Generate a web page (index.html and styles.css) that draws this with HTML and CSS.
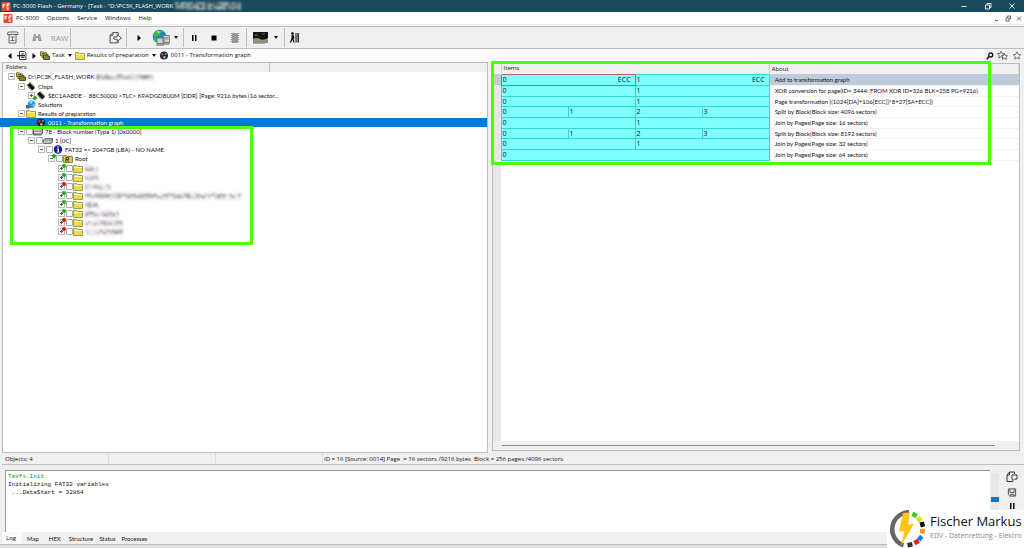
FILE: index.html
```html
<!DOCTYPE html>
<html lang="en">
<head>
<meta charset="utf-8">
<title>PC-3000 Flash</title>
<link rel="stylesheet" href="styles.css">
</head>
<body>
<svg class="defs" aria-hidden="true">
  <symbol id="logo" viewBox="0 0 10 10"><rect width="10" height="10" rx="1" fill="#e8472b"/><path d="M1 2h3v2H3v2H1zM6 1h3v2H8v2H5V3h1zM5 6h3v3H6V7H5z" fill="#ffd9c9"/></symbol>
  <symbol id="folder" viewBox="0 0 10 9"><path d="M.5 1.500h3l1 1h5v6h-9z" fill="#e6dc52" stroke="#8f8a3c" stroke-width=".8"/><path d="M1 3.500h8" stroke="#fffbb0" stroke-width="1"/></symbol>
  <symbol id="stack" viewBox="0 0 10 9"><path d="M.5.8h3l1 1h2v3h-6z" fill="#e6dc52" stroke="#55521c" stroke-width=".8"/><path d="M2 2.500h3l1 1h2v3H2z" fill="#c9bf3a" stroke="#55521c" stroke-width=".8"/><path d="M3.500 4h3l1 1h2v3.500h-6z" fill="#8c8630" stroke="#333112" stroke-width=".8"/></symbol>
  <symbol id="chip" viewBox="0 0 10 9"><path d="M1 3 4 .5 9 6 6 8.500z" fill="#161616"/><path d="M1 3.500 5.500 8.500M4.500.5l4.500 5" stroke="#8b8340" stroke-width="1.200" stroke-dasharray="1 .8"/></symbol>
  <symbol id="globe" viewBox="0 0 10 9"><circle cx="5.500" cy="4.300" r="3.800" fill="#2196e3"/><path d="M3 2q3-2 4 0L5 4zM6 5l3-1-1 3z" fill="#9bdcf4"/><path d="M0 5h4v3.500H0z" fill="#4f6e86"/></symbol>
  <symbol id="graph" viewBox="0 0 10 9"><circle cx="5" cy="4.500" r="4" fill="#1f2430"/><circle cx="3.300" cy="3.300" r="1.200" fill="#d23b32"/><circle cx="6.700" cy="3" r="1.100" fill="#4aa3ff"/><circle cx="5.400" cy="6.300" r="1.200" fill="#b9b9b9"/></symbol>
  <symbol id="drive" viewBox="0 0 10 9"><path d="M.5 4 2 2.500h7.500V6L8 7.500H.5z" fill="#c4c4c4" stroke="#555" stroke-width=".8"/><path d="M.5 4H8l1.500-1.500M8 4v3.500" stroke="#777" stroke-width=".6" fill="none"/></symbol>
  <symbol id="block" viewBox="0 0 10 9"><path d="M.5 3 2 1h7.500v5L8 8H.5z" fill="#9d9d9d" stroke="#3c3c3c" stroke-width=".8"/><path d="M.5 3H8M1 5.500h7" stroke="#eee" stroke-width=".8"/></symbol>
  <symbol id="info" viewBox="0 0 9 9"><circle cx="4.500" cy="4.500" r="4.200" fill="#0b1a98"/><path d="M4.500 1.300v1.500M3.300 4h1.500v3M3.200 7h2.700" stroke="#fff" stroke-width="1.200" fill="none"/></symbol>
  <symbol id="rootdir" viewBox="0 0 10 9"><path d="M.5 1.500h3l1 1h5v6h-9z" fill="#d8cc42" stroke="#77722a" stroke-width=".8"/><path d="M3 8V3.500h2.500v2H3.500l3 2.500" stroke="#222" stroke-width=".9" fill="none"/></symbol>
  <symbol id="scroll" viewBox="0 0 12 13"><path d="M2.500 1h7.500q2 0 1.500 2.500H1Q.5 1 2.500 1zM2.500 3.500v8.500h7V3.500M4 6h4M6 6v4M4 9.500h4" fill="none" stroke="#666" stroke-width="1"/></symbol>
  <symbol id="binoc" viewBox="0 0 10 9"><path d="M2 1h2v2h2V1h2l1.800 7H6V5H4v3H.2z" fill="#a2a2a2"/></symbol>
  <symbol id="export" viewBox="0 0 12 12"><path d="M8.500 4V1.500H3.500L1 4v7h7.500V9M1 4h2.500V1.500" fill="none" stroke="#444" stroke-width=".9"/><path d="M4.500 5.500h3V3.300l4 3.200-4 3.200V7.500h-3z" fill="#fff" stroke="#444" stroke-width=".9"/></symbol>
  <symbol id="netglobe" viewBox="0 0 18 18"><circle cx="7.500" cy="7.500" r="6.800" fill="#1b86d6"/><path d="M3 3q4-3 8-1L8 6 4 8 1 8zM3 9l5 2-2 3q-4-1-5-4z" fill="#39b54a"/><path d="M4 3l3-1 1 2z" fill="#d8f3a0"/><path d="M5 9h7v5.500H5zM11 6.500h6.500v7H11z" fill="#d3d0c5" stroke="#666" stroke-width=".8"/><path d="M12 8h4.500v2.500H12z" fill="#a8a69a"/><path d="M4 16h8M10.500 15h7" stroke="#888" stroke-width="1.500"/></symbol>
  <symbol id="stopchip" viewBox="0 0 9 12"><path d="M1.500 1h6v10h-6z" fill="#999"/><path d="M1 1v10M8 1v10" stroke="#999" stroke-width="1.500" stroke-dasharray="1 1"/></symbol>
  <symbol id="picture" viewBox="0 0 16 14"><path d="M0 1h15v11H0z" fill="#14170f"/><path d="M0 8q4-2 7 0t8-1v5H0z" fill="#8b9480"/><path d="M1 4h4M9 3h3" stroke="#7c8058" stroke-width=".8"/><path d="M0 12.500h12" stroke="#aaa"/></symbol>
  <symbol id="men" viewBox="0 0 10 11"><circle cx="3" cy="1.500" r="1.300"/><path d="M2.200 3h2L5 6l-1 1 1 3.500H3.800L3 7.500 1.500 10.500H.2L2 6.500zM6 1h1v9.500H6zM8 1h1.300v9.500H8z"/></symbol>
  <symbol id="docnav" viewBox="0 0 10 9"><path d="M2.500.5h5l1.500 1.500v6.500H2.500zM4 3h3.500M4 6.500h3.500" fill="#fff" stroke="#222" stroke-width=".9"/><path d="M0 4.700h8" stroke="#222" stroke-width="1.300"/></symbol>
  <symbol id="key" viewBox="0 0 8 8"><circle cx="4.700" cy="3" r="2" fill="none" stroke="#111" stroke-width="1.300"/><path d="M3.200 4.500.8 7.300" stroke="#111" stroke-width="1.600"/></symbol>
  <symbol id="star" viewBox="0 0 10 10"><path d="m5 .9 1.200 2.800 3 .3-2.300 2 .7 3L5 7.400 2.400 9l.7-3L.8 4l3-.3z" fill="#fff" stroke="#333" stroke-width=".7"/></symbol>
  <symbol id="stars" viewBox="0 0 11 10"><path d="m4 .7 1 2.300 2.500.2-2 1.800.6 2.500L4 6.200 1.800 7.500l.6-2.500-2-1.800L3 3z" fill="#fff" stroke="#333" stroke-width=".7"/><path d="m7.400 3 .9 2 2.200.3-1.700 1.500.5 2.200-1.900-1.200L5.500 9 6 6.800 4.400 5.300 6.500 5z" fill="#fff" stroke="#333" stroke-width=".7"/></symbol>
  <symbol id="savedoc" viewBox="0 0 12 12"><path d="M7 10.500H1V4l2.500-3h5v2M1 4h2.500V1" fill="none" stroke="#333"/><path d="M6 4h5v4H8.500L7 9.500 6 8z" fill="#fff" stroke="#333"/></symbol>
  <symbol id="disk" viewBox="0 0 10 10"><path d="M1 1h8v8H2.500L1 7.500zM2.800 1v4h4.500V1M3.500 9V7h3.500v2" fill="none" stroke="#333" stroke-width=".9"/></symbol>
</svg>

<header class="titlebar">
  <svg class="i10"><use href="#logo"/></svg>
  <h1>PC-3000 Flash - Germany - [Task - "D:\PC3K_FLASH_WORK</h1>
  <span class="redact on-dark" data-w="66" data-seed="3"></span>
  <div class="winbtns">
    <button aria-label="Minimize"><svg viewBox="0 0 8 8"><path d="M1.500 4.500h5"/></svg></button>
    <button aria-label="Restore"><svg viewBox="0 0 8 8"><path d="M1.500 3h4v4h-4zM3 2.500V1.500h4v4H6"/></svg></button>
    <button aria-label="Close"><svg viewBox="0 0 8 8"><path d="m1.500 1.500 5 5m0-5-5 5"/></svg></button>
  </div>
</header>

<nav class="menubar">
  <svg class="i10"><use href="#logo"/></svg>
  <button>PC-3000</button><button>Options</button><button>Service</button><button>Windows</button><button>Help</button>
  <div class="mdibtns">
    <button aria-label="Minimize task"><svg viewBox="0 0 8 8"><path d="M2 6.500h3"/></svg></button>
    <button aria-label="Restore task"><svg viewBox="0 0 8 8"><path d="M2 4h3v3H2zM3.500 3.500V2h3v3H5.500"/></svg></button>
    <button aria-label="Close task"><svg viewBox="0 0 8 8"><path d="m2 2.500 4 4m0-4-4 4"/></svg></button>
  </div>
</nav>

<div class="toolbar">
  <div class="group"><button class="w24" aria-label="Task log"><svg class="i13"><use href="#scroll"/></svg></button></div>
  <div class="group"><button class="w24" aria-label="Find"><svg class="i10"><use href="#binoc"/></svg></button><button class="raw" disabled>RAW</button></div>
  <div class="group gap-before"><button class="w22" aria-label="Export"><svg class="i13"><use href="#export"/></svg></button></div>
  <div class="group pad-end"><button class="w24" aria-label="Start"><svg class="i8" viewBox="0 0 8 8"><path d="M2.500 1v6L6 4z"/></svg></button><button class="w20" aria-label="Network"><svg class="i18"><use href="#netglobe"/></svg></button><button class="drop" aria-label="Network options"></button></div>
  <div class="group"><button class="w20" aria-label="Pause"><svg class="i8" viewBox="0 0 8 8"><path d="M2 1h1.500v6H2zM5 1h1.500v6H5z"/></svg></button><button class="w20" aria-label="Stop"><svg class="i8" viewBox="0 0 8 8"><path d="M1.500 1.500h5v5h-5z"/></svg></button><button class="w22" aria-label="Chip"><svg class="i12"><use href="#stopchip"/></svg></button></div>
  <div class="group pad-both"><button class="w20" aria-label="View"><svg class="i16"><use href="#picture"/></svg></button><button class="drop" aria-label="View options"></button></div>
  <div class="group last"><button class="w18" aria-label="Exit"><svg class="i11"><use href="#men"/></svg></button></div>
</div>

<div class="pathbar">
  <nav class="crumbs">
    <button class="w12" aria-label="Back"><svg class="i8" viewBox="0 0 8 8"><path d="M5.500 1v6L2 4z"/></svg></button>
    <button class="w12" aria-label="History"><svg class="i10"><use href="#docnav"/></svg></button>
    <button class="w12" aria-label="Forward"><svg class="i8" viewBox="0 0 8 8"><path d="M2.500 1v6L6 4z"/></svg></button>
    <button class="crumb"><svg class="i10"><use href="#stack"/></svg>Task</button><button class="drop" aria-label="Task list"></button>
    <button class="crumb"><svg class="i10"><use href="#folder"/></svg>Results of preparation</button><button class="drop" aria-label="Results list"></button>
    <button class="crumb"><svg class="i10"><use href="#graph"/></svg>0011 - Transformation graph</button>
  </nav>
  <div class="favs">
    <button aria-label="Search"><svg class="i8"><use href="#key"/></svg></button>
    <button aria-label="Favorites"><svg class="i11"><use href="#stars"/></svg></button>
    <button aria-label="Add favorite"><svg class="i10"><use href="#star"/></svg></button>
  </div>
</div>

<main class="work">
  <section class="folders">
    <div class="colhead"><span>Folders</span></div>
    <ul class="tree">
      <li><div class="node"><i class="exp minus"></i><svg class="i10"><use href="#stack"/></svg><span>D:\PC3K_FLASH_WORK</span><span class="redact" data-w="58" data-seed="8"></span></div>
        <ul class="spaced">
          <li><div class="node"><i class="exp minus"></i><svg class="i10"><use href="#chip"/></svg><span>Chips</span></div>
            <ul><li><div class="node"><i class="exp plus"></i><svg class="i10"><use href="#chip"/></svg><i class="dot low"></i><span>$EC1AA8DE -&nbsp; 88C50000 &lt;TLC&gt; K9ADGD8U0M [DDR] [Page: 9216 bytes (16 sector...</span></div></li></ul></li>
          <li><div class="node"><i class="exp"></i><svg class="i10"><use href="#globe"/></svg><span>Solutions</span></div></li>
          <li><div class="node"><i class="exp minus"></i><svg class="i10"><use href="#folder"/></svg><span>Results of preparation</span></div>
            <ul><li class="selected"><div class="node"><i class="exp"></i><svg class="i10"><use href="#graph"/></svg><span>0011 - Transformation graph</span></div></li></ul></li>
          <li><div class="node"><i class="exp minus"></i><input type="checkbox" aria-label="78 - Block number"><svg class="i10"><use href="#block"/></svg><span>78 - Block number (Type 1) [0x0000]</span></div>
            <ul><li><div class="node"><i class="exp minus"></i><input type="checkbox" aria-label="1 [0C]"><svg class="i10"><use href="#drive"/></svg><span>1 [0C]</span></div>
              <ul><li><div class="node"><i class="exp minus"></i><input type="checkbox" aria-label="FAT32 volume"><svg class="i10"><use href="#info"/></svg><span>FAT32 =&lt; 2047GB (LBA) - NO NAME</span></div>
                <ul><li><div class="node"><i class="exp minus"></i><i class="dot"></i><input type="checkbox" aria-label="Root"><svg class="i10"><use href="#rootdir"/></svg><span>Root</span></div>
                  <ul class="spaced" id="dirs"></ul></li></ul></li></ul></li></ul></li>
        </ul></li>
    </ul>
    <div class="frame frame-tree"></div>
  </section>

  <section class="graph">
    <table>
      <colgroup><col class="c-mark"><col class="c-items" span="4"><col></colgroup>
      <thead><tr><th></th><th colspan="4">Items</th><th>About</th></tr></thead>
      <tbody>
        <tr class="current"><th></th><td class="cell picked" colspan="2"><div><span>0</span><span>ECC</span></div></td><td class="cell" colspan="2"><div><span>1</span><span>ECC</span></div></td><td>Add to transformation graph</td></tr>
        <tr><th></th><td class="cell" colspan="2">0</td><td class="cell" colspan="2">1</td><td>XOR conversion for page(ID= 3444: FROM XOR ID=326 BLK=258 PG=9216)</td></tr>
        <tr><th></th><td class="cell" colspan="2">0</td><td class="cell" colspan="2">1</td><td>Page transformation ((1024[DA]+106[ECC])*8+27[SA+ECC])</td></tr>
        <tr><th></th><td class="cell">0</td><td class="cell">1</td><td class="cell">2</td><td class="cell">3</td><td>Split by Block(Block size: 4096 sectors)</td></tr>
        <tr><th></th><td class="cell" colspan="2">0</td><td class="cell" colspan="2">1</td><td>Join by Pages(Page size: 16 sectors)</td></tr>
        <tr><th></th><td class="cell">0</td><td class="cell">1</td><td class="cell">2</td><td class="cell">3</td><td>Split by Block(Block size: 8192 sectors)</td></tr>
        <tr><th></th><td class="cell" colspan="2">0</td><td class="cell" colspan="2">1</td><td>Join by Pages(Page size: 32 sectors)</td></tr>
        <tr><th></th><td class="cell" colspan="4">0</td><td>Join by Pages(Page size: 64 sectors)</td></tr>
      </tbody>
    </table>
    <div class="filler"></div>
    <div class="hscroll"><div class="hthumb"></div></div>
    <div class="frame frame-graph"></div>
  </section>
</main>

<div class="status"><span class="s1">Objects: 4</span><span class="s1"></span><span class="s1"></span><span class="s2">ID = 16 [Source: 0014] Page&nbsp; = 16 sectors /9216 bytes&nbsp; Block = 256 pages /4096 sectors</span></div>

<section class="logarea">
  <pre class="log"><span class="ok">TaVfs.Init</span>
Initializing FAT32 variables
 ...DataStart = 32864</pre>
  <input class="slider" type="range" min="0" max="100" value="45" aria-label="Log detail">
  <div class="logtools">
    <button aria-label="Save log as"><svg class="i12"><use href="#savedoc"/></svg></button>
    <button aria-label="Save log"><svg class="i10"><use href="#disk"/></svg></button>
    <button aria-label="Pause log"><svg class="i8" viewBox="0 0 8 8"><path d="M2 1h1.500v6H2zM5 1h1.500v6H5z"/></svg></button>
  </div>
</section>

<nav class="tabs">
  <button class="active">Log</button><button class="short">Map</button><button class="short">HEX</button><button>Structure</button><button>Status</button><button>Processes</button>
</nav>
<footer class="bottom"></footer>

<aside class="brand">
  <svg viewBox="0 0 40 38" class="brandmark">
    <path d="M22 2.300A17 17 0 0 0 16.500 35.300" fill="none" stroke="#666" stroke-width="4.500"/>
    <g><rect x="25" y="2.500" width="5" height="4.500" fill="#3cd11c" transform="rotate(30 27 5)"/><rect x="30" y="6.500" width="5" height="5" fill="#dbe51c" transform="rotate(45 32 9)"/><rect x="33" y="12" width="4.500" height="5" fill="#111" transform="rotate(-15 35 14)"/><rect x="33" y="19" width="5" height="4.500" fill="#f39a12" transform="rotate(5 35 21)"/><rect x="31" y="25.500" width="4.500" height="5" fill="#157fe8" transform="rotate(40 33 28)"/><rect x="27" y="30" width="5" height="4.500" fill="#e8231c" transform="rotate(-30 29 32)"/><rect x="20.500" y="32.500" width="5" height="4.500" fill="#333" transform="rotate(-10 23 35)"/></g>
    <path d="m16 3 7-.5-2 12 6-.5-13 22 3.500-15-5.500.5z" fill="#ffc512"/>
  </svg>
  <div class="brandtext"><strong>Fischer Markus</strong><small>EDV - Datenrettung - Elektro</small></div>
</aside>
<script src="script.js"></script>
</body>
</html>
```
FILE: styles.css
```css
:root {
  --ui: "Open Sans", "Noto Sans", sans-serif;
  --list: Lato, "Liberation Sans", sans-serif;
  --line: #bdbdbd;
  --face: #f0f0f0;
  --mark: #4dff00;
}
* { box-sizing: border-box; }
body {
  margin: 0;
  height: 100vh;
  display: flex;
  flex-direction: column;
  overflow: hidden;
  position: relative;
  background: var(--face);
  color: #111;
  font: 6px/9px var(--ui);
}
button {
  border: 0;
  padding: 0;
  background: none;
  color: inherit;
  font: inherit;
  display: flex;
  align-items: center;
  justify-content: center;
  flex: none;
}
svg { display: block; flex: none; }
.defs { position: absolute; width: 0; height: 0; }
.i8 { width: 8px; height: 8px; }
.i10 { width: 10px; height: 9px; }
.i11 { width: 11px; height: 11px; }
.i12 { width: 12px; height: 12px; }
.i13 { width: 13px; height: 13px; }
.i16 { width: 16px; height: 14px; }
.i18 { width: 18px; height: 18px; }
.w12 { width: 12px; }
.w18 { width: 18px; }
.w20 { width: 20px; }
.w22 { width: 22px; }
.w24 { width: 24px; }

.titlebar {
  display: flex;
  align-items: center;
  height: 12px;
  padding-left: 1px;
  background: #1a4a5e;
  color: #fff;
}
.titlebar h1 { margin: 0 2px; font: inherit; white-space: nowrap; }
.winbtns, .mdibtns { display: flex; margin-left: auto; }
.winbtns button { width: 24px; }
.winbtns svg { width: 8px; height: 8px; fill: none; stroke: #e4edf0; stroke-width: 1; }
.menubar {
  display: flex;
  align-items: center;
  height: 12px;
  padding-left: 3px;
  background: #fff;
}
.menubar > button { margin-left: 3px; margin-right: 5px; }
.mdibtns button { width: 11px; }
.mdibtns svg { width: 8px; height: 8px; fill: none; stroke: #567; stroke-width: 1; }

.toolbar {
  display: flex;
  margin-top: 2px;
  height: 23px;
  border-top: 1px solid var(--line);
  border-bottom: 1px solid var(--line);
  padding: 1px 0;
}
.group { display: flex; border-right: 1px solid var(--line); }
.group.last { border: 0; }
.gap-before { padding-left: 33px; }
.pad-end { padding-right: 2px; }
.pad-both { padding: 0 3px 0 4px; }
.raw { width: 21px; color: #999; font-size: 8px; }
.drop { width: 10px; }
.drop::before { content: ""; border: 2px solid transparent; border-top: 3px solid #111; border-bottom: 0; }

.pathbar { display: flex; height: 13px; }
.crumbs { display: flex; align-items: center; flex: 1; padding-left: 4px; background: #fcfcfc; }
.crumb { gap: 2px; }
.favs { display: flex; width: 40px; align-items: center; justify-content: space-around; }

.work { display: flex; flex: 1; min-height: 0; padding-left: 2px; gap: 4px; }
.folders, .graph { position: relative; background: #fff; border: 1px solid var(--line); font-family: var(--list); }
.folders { flex: 486 1 0; }
.graph { flex: 528 1 0; margin: 1px 4px 2px 0; display: flex; flex-direction: column; }
.colhead { height: 9px; background: var(--face); font-family: var(--ui); }
.colhead span { display: block; width: 267px; padding-left: 3px; border-right: 1px solid var(--line); }
.tree, .tree ul { list-style: none; margin: 0; padding: 0; }
.tree { padding-left: 3px; }
.tree ul { padding-left: 10px; }
.tree ul.spaced { padding-top: 1px; }
.node { display: flex; align-items: center; height: 9px; white-space: nowrap; position: relative; }
.node span { margin-left: 2px; }
.exp { width: 10px; height: 9px; flex: none; display: flex; align-items: center; justify-content: center; }
.minus::before, .plus::before {
  content: "";
  width: 5px;
  height: 5px;
  border: 1px solid #bbb;
  background: linear-gradient(#555, #555) center / 3px 1px no-repeat #fff;
}
.plus::before {
  background: linear-gradient(#555, #555) center / 3px 1px no-repeat, linear-gradient(#555, #555) center / 1px 3px no-repeat #fff;
}
.node input {
  appearance: none;
  margin: 0;
  width: 7px;
  height: 7px;
  border: 1px solid #aaa;
  border-radius: 1px;
  background: #fff;
  flex: none;
}
.dot {
  position: absolute;
  left: 6px;
  top: 0;
  width: 4px;
  height: 4px;
  border-radius: 50%;
  background: #12b012;
}
.dot.low { top: 5px; left: 7px; }
.dot.bad { background: #d40d0d; }
.selected { background: #0078d7; color: #fff; margin-left: -33px; padding-left: 33px; }
.redact svg { filter: blur(1px); }

.frame { position: absolute; border: 3px solid var(--mark); pointer-events: none; }
.frame-tree { left: 7px; top: 63px; width: 243px; height: 119px; }
.frame-graph { left: -2px; top: -3px; width: 500px; height: 104px; }

table { border-collapse: collapse; table-layout: fixed; width: 100%; }
.c-mark { width: 8px; }
.c-items { width: 67px; }
td, th { padding: 0 0 0 5px; text-align: left; font-weight: normal; white-space: nowrap; overflow: hidden; line-height: 9px; }
thead th { height: 10px; background: var(--face); border-right: 1px solid #d0d0d0; padding-left: 2px; font-family: var(--ui); }
tbody tr { height: 11px; }
tbody tr:nth-child(3n) { height: 10px; }
tbody th { background: #e6e6e6; }
tbody td { border-bottom: 1px solid #f2f2f2; }
.current th, .current td { background: #becbdb; }
tbody .cell { background: #80ffff; border: 1px solid #35d6d6; padding: 0 0 0 1px; font-family: var(--ui); font-size: 7px; }
tbody .cell + .cell { border-left: 1px solid #10b4b8; }
tbody .picked { border: 1px solid #c8605c; }
.cell div { display: flex; justify-content: space-between; padding-right: 4px; }
.filler { flex: 1; border-left: 8px solid #e6e6e6; }
.hscroll { height: 9px; background: var(--face); padding: 4px 24px 0 9px; }
.hthumb { height: 1px; background: #8a8a8a; }

.status { display: flex; height: 12px; margin-left: 2px; border-bottom: 1px solid var(--line); line-height: 12px; white-space: nowrap; }
.s1 { width: 107px; padding-left: 3px; border-right: 1px solid #ddd; }
.s2 { padding-left: 1px; }

.logarea { display: flex; height: 62px; margin: 5px 0 0 5px; }
.log { flex: 1; margin: 0; padding: 2px; background: #fff; border: solid #999; border-width: 1px 0 0 1px; font: 6px/8px "Liberation Mono", monospace; }
.ok { color: #1c8c1c; }
.slider { appearance: none; writing-mode: vertical-lr; width: 8px; height: 59px; margin: 3px 0 0 1px; background: #e4e8ea; }
.slider::-webkit-slider-thumb { appearance: none; width: 8px; height: 5px; background: #0078d7; }
.logtools { width: 25px; display: flex; flex-direction: column; align-items: center; gap: 5px; padding-top: 1px; }

.tabs { display: flex; height: 12px; margin-left: 2px; }
.tabs button { padding: 0 3px; font-family: var(--list); }
.tabs .short { padding: 0 5px; }
.tabs .active { padding: 0 6px 0 4px; background: #fafafa; font-family: var(--ui); }
.bottom { height: 4px; border-top: 1px solid var(--line); background: #e0e0e0; }

.brand { position: absolute; right: 0; bottom: 0; display: flex; width: 137px; height: 38px; background: #fff; white-space: nowrap; }
.brandmark { width: 40px; height: 38px; }
.brandtext { display: flex; flex-direction: column; padding: 3px 0 0 3px; }
.brandtext strong { font-weight: normal; font-size: 13px; line-height: 17px; color: #111; }
.brandtext small { font-size: 7px; line-height: 11px; color: #888; }
```
FILE: script.js
```js
// Draws the pixelated strips that hide private names, and the list of directories.
const dirs = [[13, 1], [14, 1], [26, 0], [156, 1], [14, 1], [34, 1], [38, 0], [38, 0]];
document.getElementById("dirs").innerHTML = dirs.map(([w, ok], n) =>
  `<li><div class="node"><i class="exp plus"></i><i class="dot${ok ? "" : " bad"}"></i><input type="checkbox" aria-label="Directory ${n + 1}"><svg class="i10"><use href="#folder"/></svg><span class="redact" data-w="${w}" data-seed="${n + 11}"></span></div></li>`
).join("");

document.querySelectorAll(".redact").forEach(el => {
  let s = Number(el.dataset.seed) * 7919;
  const rnd = () => (s = (s * 16807) % 2147483647) / 2147483647;
  rnd(); rnd();
  const dark = el.classList.contains("on-dark");
  const w = Number(el.dataset.w);
  let out = "";
  for (let y = 0; y < 8; y += 2)
    for (let x = 0; x < w; x += 3) {
      const edge = y === 0 || y === 6;
      const v = dark ? 80 + rnd() * 110 : (edge ? 225 : 150) + rnd() * (edge ? 30 : 95);
      const c = dark ? [v * .8, v, v * 1.05] : [v + rnd() * 8, v, v + rnd() * 10];
      out += `<rect x="${x}" y="${y}" width="3" height="2" fill="rgb(${c.map(Math.round)})"/>`;
    }
  el.innerHTML = `<svg width="${w}" height="8">${out}</svg>`;
});
```
